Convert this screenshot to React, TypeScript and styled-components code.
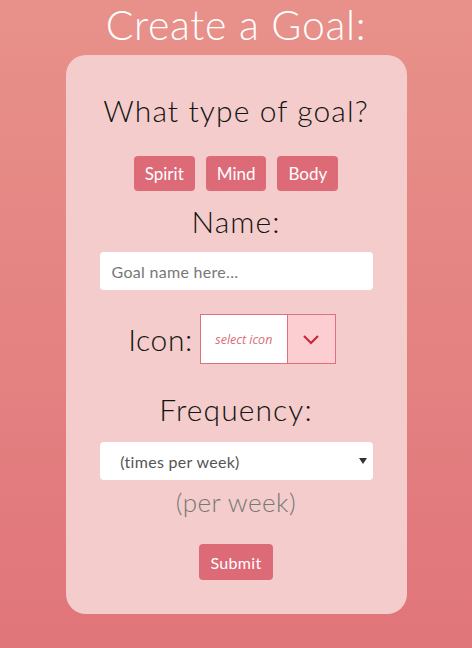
import React from "react"
import styled, { createGlobalStyle } from "styled-components"

const GlobalStyle = createGlobalStyle`
  html, body {
    margin: 0;
    padding: 0;
  }
  body {
    min-height: 648px;
    background: linear-gradient(180deg, #e8918a 0%, #e0757a 100%);
    font-family: "Lato", "Noto Sans", sans-serif;
  }
`

const Page = styled.div`
  display: flex;
  flex-direction: column;
  align-items: center;
  padding-top: 2px;
  padding-bottom: 34px;
`

const Title = styled.h1`
  margin: 0;
  font-size: 41px;
  font-weight: 300;
  color: #ffffff;
  line-height: 46px;
  letter-spacing: 0.7px;
`

const Card = styled.div`
  width: 341px;
  margin-top: 7px;
  box-sizing: border-box;
  padding: 36px 34px 34px;
  background: #f4cccb;
  border-radius: 20px;
  display: flex;
  flex-direction: column;
  align-items: center;
`

const Heading = styled.h2<{ $top?: number }>`
  margin: ${({ $top }) => $top ?? 0}px 0 0;
  font-size: 30px;
  font-weight: 300;
  line-height: 38px;
  letter-spacing: 1.1px;
  color: #141414;
`

const TypeRow = styled.div`
  display: flex;
  gap: 11px;
  margin-top: 27px;
`

const PinkButton = styled.button`
  height: 35px;
  padding: 0 11px;
  border: none;
  border-radius: 4px;
  background: #dc6a77;
  color: #ffffff;
  font-family: inherit;
  font-size: 17px;
  cursor: pointer;
`

const TextInput = styled.input`
  width: 273px;
  height: 38px;
  margin-top: 12px;
  box-sizing: border-box;
  padding: 0 12px;
  border: none;
  border-radius: 4px;
  background: #ffffff;
  font-family: inherit;
  font-size: 16px;
  &::placeholder {
    color: #777777;
    letter-spacing: 0.3px;
  }
`

const IconRow = styled.div`
  display: flex;
  align-items: center;
  gap: 7px;
  margin-top: 24px;
  margin-right: 8px;
`

const IconLabel = styled.span`
  font-size: 30px;
  font-weight: 300;
  letter-spacing: 0.6px;
  color: #141414;
`

const IconPicker = styled.div`
  display: flex;
  height: 50px;
  border: 1px solid #e0707c;
  box-sizing: border-box;
`

const PickerText = styled.div`
  width: 86px;
  display: flex;
  align-items: center;
  justify-content: center;
  background: #ffffff;
  font-family: "Open Sans", sans-serif;
  font-style: italic;
  font-size: 12.5px;
  color: #dc6c78;
  border-right: 1px solid #e0707c;
`

const PickerArrow = styled.div`
  width: 47px;
  display: flex;
  align-items: center;
  justify-content: center;
  background: #fcced2;
`

const Select = styled.select`
  width: 273px;
  height: 38px;
  margin-top: 14px;
  box-sizing: border-box;
  padding: 0 12px;
  border: none;
  border-radius: 4px;
  background: #ffffff;
  font-family: inherit;
  font-size: 16px;
  letter-spacing: 0.3px;
  color: #555555;
  appearance: none;
  background-image: url("data:image/svg+xml;utf8,<svg xmlns='http://www.w3.org/2000/svg' width='8' height='6'><path d='M0 0h8L4 6z' fill='%23333'/></svg>");
  background-repeat: no-repeat;
  background-position: right 6px center;
`

const Note = styled.div`
  margin-top: 6px;
  font-size: 26px;
  font-weight: 300;
  letter-spacing: 0.5px;
  color: #777777;
`

const SubmitButton = styled(PinkButton)`
  height: 36px;
  margin-top: 26px;
  padding: 0 12px;
  font-size: 16px;
  letter-spacing: 0.3px;
`

export default function App() {
  return (
    <>
      <GlobalStyle />
      <Page>
        <Title>Create a Goal:</Title>
        <Card>
          <Heading>What type of goal?</Heading>
          <TypeRow>
            <PinkButton>Spirit</PinkButton>
            <PinkButton>Mind</PinkButton>
            <PinkButton>Body</PinkButton>
          </TypeRow>
          <Heading $top={11}>Name:</Heading>
          <TextInput placeholder="Goal name here..." />
          <IconRow>
            <IconLabel>Icon:</IconLabel>
            <IconPicker>
              <PickerText>select icon</PickerText>
              <PickerArrow>
                <svg width="18" height="11" viewBox="0 0 18 11">
                  <path d="M2 2l7 7 7-7" fill="none" stroke="#c8283a" strokeWidth="2.2" />
                </svg>
              </PickerArrow>
            </IconPicker>
          </IconRow>
          <Heading $top={26}>Frequency:</Heading>
          <Select defaultValue="">
            <option value="">&nbsp;&nbsp;(times per week)</option>
          </Select>
          <Note>(per week)</Note>
          <SubmitButton>Submit</SubmitButton>
        </Card>
      </Page>
    </>
  )
}
